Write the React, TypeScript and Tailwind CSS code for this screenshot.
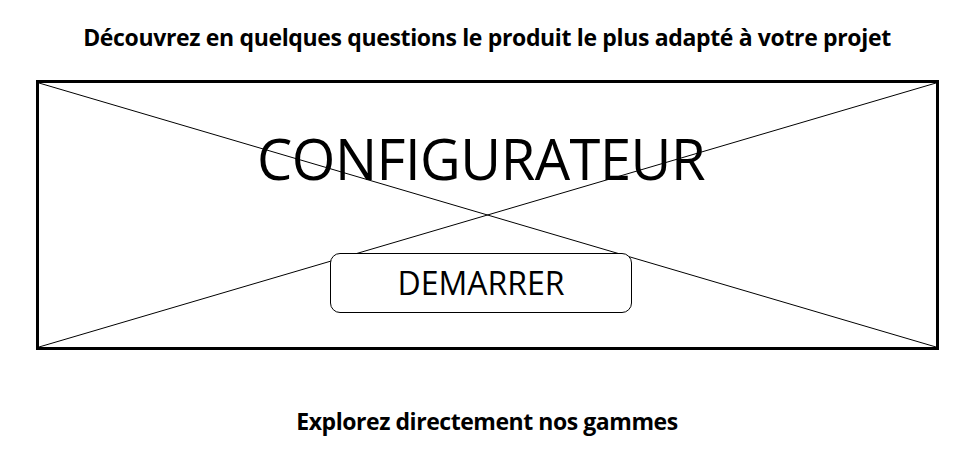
export default function App() {
  return (
    <div className="w-[960px] h-[454px] bg-white flex flex-col items-center font-['Open_Sans',sans-serif] text-black">
      <h1 className="mt-[21px] ml-[14px] h-[32px] leading-[32px] text-[23px] font-bold tracking-[-0.35px]">
        Découvrez en quelques questions le produit le plus adapté à votre projet
      </h1>

      <div className="relative mt-[27px] w-[903px] h-[270px] border-[3px] border-black self-start ml-[36px]">
        <svg className="absolute inset-0 w-full h-full" preserveAspectRatio="none">
          <line x1="0" y1="0" x2="100%" y2="100%" stroke="black" strokeWidth="1" />
          <line x1="0" y1="100%" x2="100%" y2="0" stroke="black" strokeWidth="1" />
        </svg>
        <div className="relative flex flex-col items-center pr-[13px]">
          <div className="mt-[43px] h-[64px] leading-[64px] text-[56px] tracking-[-0.5px]">CONFIGURATEUR</div>
          <button className="mt-[63px] w-[302px] h-[60px] rounded-[10px] border border-black bg-white text-[32px] leading-none">
            DEMARRER
          </button>
        </div>
      </div>

      <h2 className="mt-[55px] ml-[14px] h-[32px] leading-[32px] text-[23px] font-bold tracking-[-0.45px]">
        Explorez directement nos gammes
      </h2>
    </div>
  );
}
